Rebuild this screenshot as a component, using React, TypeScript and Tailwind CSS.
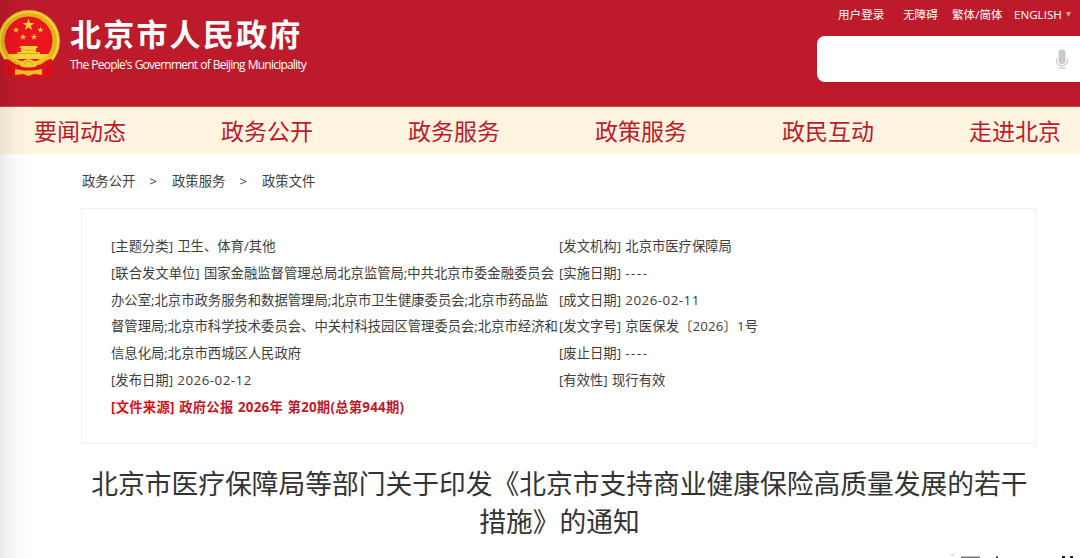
import React from 'react';

const topLinks = [
  { label: '用户登录', className: 'w-[65px]' },
  { label: '无障碍', className: 'w-[49px]' },
  { label: '繁体/简体', className: 'w-[62px]' },
];

const navItems = ['要闻动态', '政务公开', '政务服务', '政策服务', '政民互动', '走进北京'];

const leftMeta = [
  '[主题分类] 卫生、体育/其他',
  '[联合发文单位] 国家金融监督管理总局北京监管局;中共北京市委金融委员会',
  '办公室;北京市政务服务和数据管理局;北京市卫生健康委员会;北京市药品监',
  '督管理局;北京市科学技术委员会、中关村科技园区管理委员会;北京市经济和',
  '信息化局;北京市西城区人民政府',
];

const rightMeta = [
  { name: '[发文机构]', value: '北京市医疗保障局' },
  { name: '[实施日期]', value: '----', className: 'tracking-[1.5px]' },
  { name: '[成文日期]', value: '2026-02-11', className: 'tracking-[0.5px]' },
  { name: '[发文字号]', value: '京医保发〔2026〕1号', className: 'tracking-[0.12px]' },
  { name: '[废止日期]', value: '----', className: 'tracking-[1.5px]' },
  { name: '[有效性]', value: '现行有效' },
];

const star = 'M0-1 .225-.309 .951-.309 .363 .118 .588 .809 0 .382-.588 .809-.363 .118-.951-.309-.225-.309Z';

const Emblem: React.FC = () => (
  <svg viewBox="0 0 60 70" className="h-[70px] w-[60px] shrink-0">
    <circle cx="29" cy="32" r="31" fill="#e8b71d" />
    <circle cx="29" cy="32" r="29" fill="none" stroke="#f8d940" strokeWidth="1.6" />
    <circle cx="29" cy="32" r="26" fill="none" stroke="#dda51a" strokeWidth="1" strokeDasharray="4 2" />
    <circle cx="28.5" cy="31.5" r="24" fill="#eb1520" />
    <g fill="#fbd433">
      <path d={star} transform="translate(28.5 16) scale(6.3)" />
      <path d={star} transform="translate(16 21) scale(3.4)" />
      <path d={star} transform="translate(40.5 21) scale(3.4)" />
      <path d={star} transform="translate(23 28) scale(3.4)" />
      <path d={star} transform="translate(34 28) scale(3.4)" />
      <path d="M21 37h16l1 2h-2v4h4v3H17v-3h4v-4h-2Z" />
      <path d="M9 45h39v5H9Z" />
    </g>
    <path d="M20 41h17M18 44.5h21" stroke="#dc941b" strokeWidth="0.8" />
    <path d="M5 50c7 0 8 6 14 6h19c6 0 7-6 14-6l1 16-9 2-7 1H21l-8-1-9-2Z" fill="#de1119" />
    <path d="M8 48c8 1 10 7 17 6h7c7 1 9-5 17-6" fill="none" stroke="#f4c328" strokeWidth="3" />
    <path d="M20 57c1-9 16-9 17 0-5 2-12 2-17 0Z" fill="#f7cd33" />
    <path d="M24 56c1-5 8-5 9 0" fill="none" stroke="#d99b20" strokeWidth="1" />
    <path d="m15 60 9 1.5h9l9-1.5v6l-8-1-5.5 2-5.5-2-8 1Z" fill="#f0bd25" />
    <path d="M9 58v8M48 58v8" stroke="#b90d18" strokeWidth="1" />
  </svg>
);

const MicIcon: React.FC = () => (
  <svg viewBox="0 0 12 20" className="h-5 w-3" fill="none" stroke="#c9c9c9" strokeWidth="1.2">
    <rect x="2.5" y="0.5" width="7" height="14.5" rx="3.5" fill="#c9c9c9" stroke="none" />
    <path d="M.6 9.5V12a5.4 4.5 0 0 0 10.8 0V9.5M6 16.5V19M2 19h8" />
  </svg>
);

const Header: React.FC = () => (
  <header className="flex h-[107px] justify-between border-b border-[#c84a50] bg-[#bd1a2c] text-white">
    <div className="flex pt-[9px]">
      <Emblem />
      <div className="pl-[10px]">
        <h1 className="h-[50px] text-[31px] leading-[50px] font-bold tracking-[2.2px]">北京市人民政府</h1>
        <p className="-mt-[3px] text-[12px] leading-[18px] tracking-[-0.78px] whitespace-nowrap [word-spacing:0.6px]">The People's Government of Beijing Municipality</p>
      </div>
    </div>
    <div className="w-[263px]">
      <div className="flex h-9 pt-[5px] pl-[21px] text-[11.6px] leading-5 whitespace-nowrap">
        {topLinks.map((link) => (
          <a key={link.label} className={link.className}>{link.label}</a>
        ))}
        <a className="w-[53px]">ENGLISH</a>
        <svg viewBox="0 0 5 5" className="mt-[7px] -ml-[1px] h-[5px] w-[5px]">
          <path d="M0 0h5L2.5 5Z" fill="#dda66d" />
        </svg>
      </div>
      <div className="flex h-[46px] items-center justify-end rounded-l-[8px] bg-white pr-3">
        <MicIcon />
      </div>
    </div>
  </header>
);

const App: React.FC = () => {
  return (
    <div className="relative h-[558px] w-[1080px] overflow-hidden bg-white font-['Open_Sans','Noto_Sans_CJK_SC',sans-serif] text-[#3d3d3d]">
      <Header />

      <nav className="flex h-[47px] bg-[#fff4df] pl-[34px] text-[23px] leading-[49px] text-[#bd1a2c]">
        {navItems.map((item) => (
          <a key={item} className="w-[187px] shrink-0">{item}</a>
        ))}
      </nav>

      <div className="flex h-[54px] pl-[82px] text-[13.33px] leading-[55px]">
        <span className="w-[67.5px]">政务公开</span>
        <span className="w-[22.5px]">&gt;</span>
        <span className="w-[67.5px]">政策服务</span>
        <span className="w-[22.5px]">&gt;</span>
        <span>政策文件</span>
      </div>

      <section className="ml-[81px] flex h-[236px] w-[956px] border border-[#f1f0ec] pt-6 pl-[29px] text-[13.33px] leading-[26.75px] whitespace-nowrap [word-spacing:0.8px]">
        <div className="w-[448px]">
          {leftMeta.map((line) => (
            <p key={line}>{line}</p>
          ))}
          <p>[发布日期] <span className="tracking-[0.5px]">2026-02-12</span></p>
          <p className="font-bold tracking-[0.25px] text-[#bd1a2c]"><span className="text-[#db1016]">[文件来源]</span> 政府公报 2026年 第20期(总第944期)</p>
        </div>
        <div>
          {rightMeta.map((row) => (
            <p key={row.name}>{row.name} <span className={row.className}>{row.value}</span></p>
          ))}
        </div>
      </section>

      <h2 className="pt-[21px] pl-[39px] text-center text-[26.75px] leading-[38px] whitespace-nowrap text-[#333]">
        北京市医疗保障局等部门关于印发《北京市支持商业健康保险高质量发展的若干<br />措施》的通知
      </h2>

      {/* Ombre douce du bord gauche */}
      <div className="pointer-events-none absolute inset-y-0 left-0 w-8 bg-linear-to-r from-black/8 via-black/2 to-transparent"></div>
      <svg viewBox="0 0 130 5" className="absolute right-0 bottom-0 h-[5px] w-[130px]">
        <path d="M1 1h3v2H1Z" fill="#ddd" />
        <path d="M11 3.5h19V5H11Z" fill="#777" />
        <path d="M46 3.5h2V5h-2ZM112 3h3v2h-3ZM120 3h3v2h-3Z" fill="#222" />
      </svg>
    </div>
  );
};

export default App;
